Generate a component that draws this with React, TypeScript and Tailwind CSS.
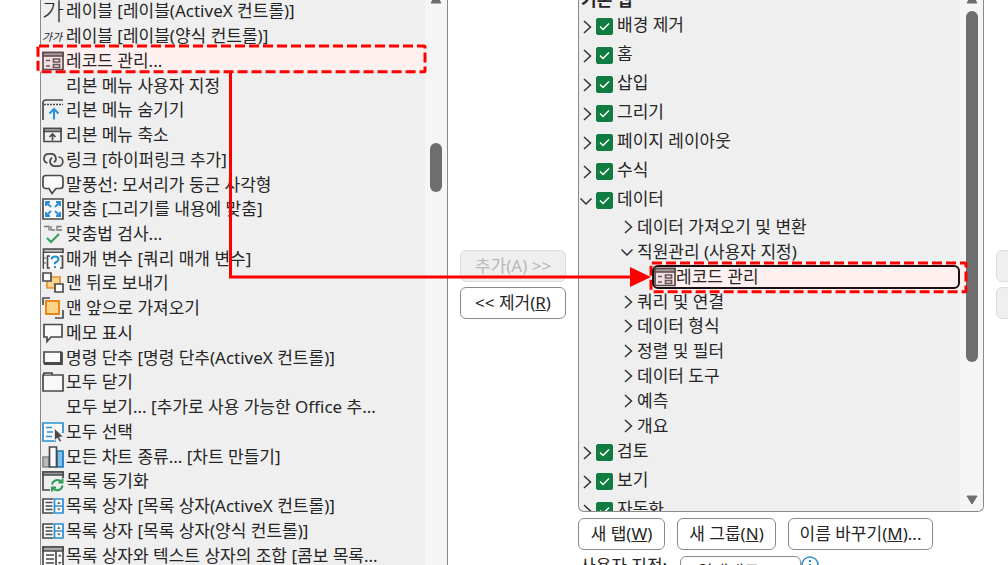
import { useState } from "react";
import type { ReactNode } from "react";
import { clsx } from "clsx";

const DARK = "#4a4a4a";
const BLUE = "#2b8fd6";

function Icon({ children }: { children: ReactNode }) {
  return (
    <svg viewBox="0 0 22 22" className="w-[22px] h-[22px] block" fill="none" stroke={DARK} strokeWidth="1.7">
      {children}
    </svg>
  );
}

function ListBoxIcon() {
  return (
    <Icon>
      <path d="M11.5 4H1v14h10.5" fill="#fafafa" />
      <path d="M3.5 7.5h7M3.5 11h7M3.5 14.5h7" strokeWidth="1.3" />
      <path d="M12.5 4H21v14h-8.5zM12.5 11H21" stroke={BLUE} fill="#fff" />
      <path d="M15 8.8h3.6L16.8 6.6zM15 13.4h3.6l-1.8 2.2z" fill={DARK} stroke="none" />
    </Icon>
  );
}

function RecordIcon() {
  return (
    <Icon>
      <path d="M1 2.5h20v17H1z" stroke="#5a4a4b" fill="#f3dfe0" />
      <path d="M1 2.5h20V6H1z" stroke="#5a4a4b" fill="#a89a9b" />
      <path d="M4 10.5h4M4 16h4" stroke="#6a5a5b" />
      <path d="M11.5 9h6v3h-6zM11.5 14.5h6v3h-6z" stroke="#6a5a5b" />
    </Icon>
  );
}

const icons: Record<string, ReactNode> = {
  label: <span className="text-2xl leading-[22px] font-light">가</span>,
  labelSmall: <span className="text-[11px] leading-[22px] italic whitespace-nowrap">가가</span>,
  record: <RecordIcon />,
  hideRibbon: (
    <Icon>
      <path d="M1 21V4q0-3 3-3h17" />
      <path d="M2 5.5h19" strokeDasharray="2 1" />
      <path d="M12 20.5v-10M7.5 14.5l4.500-4.500 4.500 4.500" stroke={BLUE} strokeWidth="2" />
    </Icon>
  ),
  minRibbon: (
    <Icon>
      <path d="M2 4.500h17v13H2z" />
      <path d="M2 4.500h17v3H2z" fill="#aaa" />
      <path d="M10.500 16.500v-6M7.500 13l3-3 3 3" />
    </Icon>
  ),
  link: (
    <Icon>
      <path d="M5.500 14A4.700 4.700 0 0 1 6 4.800h3.500A4.700 4.700 0 0 1 12 13.300" />
      <path d="M16.500 8a4.600 4.600 0 0 1-.5 9.200h-3.500A4.700 4.700 0 0 1 10 8.700" />
    </Icon>
  ),
  callout: (
    <Icon>
      <path d="M4 1.500h14q3 0 3 3v7q0 3-3 3h-4l-4 5-3-5H4q-3 0-3-3v-7q0-3 3-3z" fill="#fafafa" />
    </Icon>
  ),
  fit: (
    <Icon>
      <path d="M1 1h20v20H1z" fill="#fafafa" />
      <path
        d="M9 9L4 4M4 8V4h4M13 9l5-5M14 4h4v4M9 13l-5 5M4 14v4h4M13 13l5 5M18 14v4h-4"
        stroke={BLUE}
        strokeWidth="1.9"
      />
    </Icon>
  ),
  spelling: (
    <Icon>
      <path d="M2 3.500h5v4M9 3v4h4M19.500 3.500H15V7h5" strokeWidth="1.300" stroke="#777" />
      <path d="M5 15l4 4 8-8" stroke="#2f9e58" strokeWidth="2" />
    </Icon>
  ),
  params: (
    <Icon>
      <path d="M1.500 20V1H21v3.500H2" fill="#bbb" />
      <path d="M1.500 5h19V21h-19z" fill="#fafafa" stroke="none" />
      <path d="M1.500 4v17M1 10h3M1 15h3" strokeWidth="1.200" />
      <path d="M8 8H5.500v12H8M18 8h2.500v12H18" />
      <path d="M9.500 11.500q0-3 3.500-3t3.500 2.700q0 1.800-3.500 3.500v1.500M13 18v2" stroke={BLUE} strokeWidth="2" />
    </Icon>
  ),
  sendBack: (
    <Icon>
      <path d="M5 5h13v11H5z" fill="#fbd38a" stroke="#e8912d" />
      <path d="M1 1h8v8H1zM13 12h8v8h-8z" fill="#fafafa" />
    </Icon>
  ),
  bringFront: (
    <Icon>
      <path d="M1 8V1h7M21 13v8h-8" />
      <path d="M4 4h13v13H4z" fill="#fdd585" stroke="#e8861d" strokeWidth="2" />
    </Icon>
  ),
  memo: (
    <Icon>
      <path d="M2 2.500h18v12.500H9l-4 4.500V15H2z" fill="#fafafa" />
    </Icon>
  ),
  command: (
    <Icon>
      <path d="M2 5h17v11H2z" fill="#fafafa" />
      <path d="M19.500 5v11.500H2" strokeWidth="2.800" />
    </Icon>
  ),
  closeAll: (
    <Icon>
      <path d="M1 4h20v16H1z" fill="#f8f8f8" />
      <path d="M2 4V2h8v2" fill="#aaa" />
    </Icon>
  ),
  selectAll: (
    <Icon>
      <path d="M14 20H1V2h20v10" stroke={BLUE} fill="#fafafa" />
      <path d="M4 6.500h6M5 11h6M4 15.500h6" stroke={BLUE} />
      <path d="M12.500 7.500v12l3-2.500 2 4 2-1-2-4h4z" fill={DARK} stroke="#fff" strokeWidth=".6" />
    </Icon>
  ),
  chart: (
    <Icon>
      <path d="M1 11h6v10H1z" fill="#b9b9b9" stroke="#888" />
      <path d="M15 5h6v16h-6z" fill="#7cc0f0" stroke="#1f78b8" />
      <path d="M7.500 1h7v20h-7z" fill="#fafafa" />
    </Icon>
  ),
  sync: (
    <Icon>
      <path d="M8 20H1V2h20v6" />
      <path d="M1 2h20v3H1z" fill="#999" />
      <path
        d="M10 14.500a5.500 5.500 0 0 1 9.500-2.500M20.500 8.500v4h-4M20.500 15.500a5.500 5.500 0 0 1-9.500 3M10 21.500v-4h4"
        stroke="#2f9e58"
        strokeWidth="2"
      />
    </Icon>
  ),
  listBox: <ListBoxIcon />,
  combo: (
    <Icon>
      <path d="M1 2h20v20H1z" fill="#fafafa" />
      <path d="M1 2h20v4H1z" fill="#aaa" />
      <path d="M14 6v16M4 10h8M4 14h8M4 18h8" />
      <path d="M16 11.500h3.500L17.700 9zM16 17h3.500l-1.800 2.500z" fill={DARK} stroke="none" />
    </Icon>
  ),
};

const commands = [
  { icon: "label", text: "레이블 [레이블(ActiveX 컨트롤)]" },
  { icon: "labelSmall", text: "레이블 [레이블(양식 컨트롤)]" },
  { icon: "record", text: "레코드 관리...", marked: true },
  { icon: "", text: "리본 메뉴 사용자 지정" },
  { icon: "hideRibbon", text: "리본 메뉴 숨기기" },
  { icon: "minRibbon", text: "리본 메뉴 축소" },
  { icon: "link", text: "링크 [하이퍼링크 추가]" },
  { icon: "callout", text: "말풍선: 모서리가 둥근 사각형" },
  { icon: "fit", text: "맞춤 [그리기를 내용에 맞춤]" },
  { icon: "spelling", text: "맞춤법 검사..." },
  { icon: "params", text: "매개 변수 [쿼리 매개 변수]" },
  { icon: "sendBack", text: "맨 뒤로 보내기" },
  { icon: "bringFront", text: "맨 앞으로 가져오기" },
  { icon: "memo", text: "메모 표시" },
  { icon: "command", text: "명령 단추 [명령 단추(ActiveX 컨트롤)]" },
  { icon: "closeAll", text: "모두 닫기" },
  { icon: "", text: "모두 보기... [추가로 사용 가능한 Office 추..." },
  { icon: "selectAll", text: "모두 선택" },
  { icon: "chart", text: "모든 차트 종류... [차트 만들기]" },
  { icon: "sync", text: "목록 동기화" },
  { icon: "listBox", text: "목록 상자 [목록 상자(ActiveX 컨트롤)]" },
  { icon: "listBox", text: "목록 상자 [목록 상자(양식 컨트롤)]" },
  { icon: "combo", text: "목록 상자와 텍스트 상자의 조합 [콤보 목록..." },
];

const tabsBefore = ["배경 제거", "홈", "삽입", "그리기", "페이지 레이아웃", "수식", "데이터"];
const tabsAfter = ["검토", "보기", "자동화"];
const groupsBefore = ["데이터 가져오기 및 변환", "직원관리 (사용자 지정)"];
const groupsAfter = ["쿼리 및 연결", "데이터 형식", "정렬 및 필터", "데이터 도구", "예측", "개요"];

// Dashed red frame drawn behind the content of the marked row
function Marker({ className }: { className: string }) {
  return (
    <div className={clsx("absolute pointer-events-none", className)}>
      <svg className="block w-full h-full overflow-visible">
        <rect width="100%" height="100%" rx="1" fill="#fff0f0" stroke="#ff0000" strokeWidth="3" strokeDasharray="10 4" />
      </svg>
    </div>
  );
}

function Chevron({ open, label }: { open: boolean; label: string }) {
  return (
    <button aria-label={label} aria-expanded={open} className="w-[17px] h-5 flex items-center shrink-0">
      <svg viewBox="0 0 16 16" className="w-4 h-4" fill="none" stroke="#333" strokeWidth="1.5">
        <path d={open ? "M1.500 5.500l5.500 5.500 5.500-5.500" : "M5 2l6.500 6L5 14"} />
      </svg>
    </button>
  );
}

function TabRow({ name, open = false }: { name: string; open?: boolean }) {
  const [checked, setChecked] = useState(true);
  return (
    <li className="h-[29px] flex items-center">
      <Chevron open={open} label={name} />
      <label className="flex items-center">
        <span className="grid shrink-0">
          <input
            type="checkbox"
            checked={checked}
            onChange={(e) => setChecked(e.target.checked)}
            className="appearance-none col-start-1 row-start-1 w-[17px] h-[17px] rounded-xs border border-[#107c41] checked:bg-[#107c41]"
          />
          <svg
            viewBox="0 0 17 17"
            className="col-start-1 row-start-1 w-[17px] h-[17px] pointer-events-none"
            fill="none"
            stroke="#fff"
            strokeWidth="1.5"
          >
            <path d="M4 8.500l3 3 6-6" />
          </svg>
        </span>
        <span className="pl-1 pb-1">{name}</span>
      </label>
    </li>
  );
}

function GroupRow({ name, open = false }: { name: string; open?: boolean }) {
  return (
    <li className="flex items-center pl-[41px]">
      <Chevron open={open} label={name} />
      <span>{name}</span>
    </li>
  );
}

function Arrow({ down = false }: { down?: boolean }) {
  return (
    <svg viewBox="0 0 12 10" className="w-3 h-[10px] block" fill="#6e6e6e" stroke="#6e6e6e" strokeLinejoin="round">
      <path d={down ? "M1 1h10L6 9z" : "M1 9h10L6 1z"} />
    </svg>
  );
}

function PushButton({ className, children, disabled }: { className?: string; children: ReactNode; disabled?: boolean }) {
  return (
    <button
      disabled={disabled}
      className={clsx(
        "h-8 rounded-md border whitespace-nowrap flex items-center justify-center",
        disabled ? "bg-[#efefef] border-[#dcdcdc] text-[#b8b8b8]" : "bg-white border-[#8a8a8a]",
        className
      )}
    >
      {children}
    </button>
  );
}

export default function App() {
  return (
    <div className="relative h-screen overflow-hidden bg-white pl-10 grid grid-cols-[408fr_106px_406fr_12px] grid-rows-[100%] gap-x-3 text-[17px] leading-5 text-[#262626] font-['Noto_Sans','Noto_Sans_CJK_KR',sans-serif]">
      <section className="flex min-w-0 bg-[#efefef] border-x border-[#8a8a8a]">
        <ul className="-mt-px h-[569px] flex-1 min-w-0 grid auto-rows-fr">
          {commands.map((cmd) => (
            <li key={cmd.text} className="relative flex items-center pl-px min-h-0 whitespace-nowrap">
              {cmd.marked && <Marker className="-left-[3px] right-0 -top-0.5 bottom-px" />}
              <span className="relative w-6 h-[22px] shrink-0">{icons[cmd.icon]}</span>
              <span className="relative">{cmd.text}</span>
            </li>
          ))}
        </ul>
        <div className="w-[22px] shrink-0 bg-[#f5f5f5] flex flex-col items-center">
          <div className="-mt-1.5 h-[149px]">
            <Arrow />
          </div>
          <div className="w-3 h-[49px] rounded-full bg-[#6e6e6e]" />
        </div>
      </section>

      <div className="pt-[250px] flex flex-col gap-[5px]">
        <PushButton disabled>추가(A) &gt;&gt;</PushButton>
        <PushButton>
          &lt;&lt; 제거(<u>R</u>)
        </PushButton>
      </div>

      <section className="min-w-0">
        <div className="h-[512px] flex overflow-hidden bg-[#efefef] border border-t-0 border-[#8a8a8a] rounded-b-md">
          <div className="flex-1 min-w-0 whitespace-nowrap">
            <h2 className="h-3 flex items-end font-bold pl-0.5 pb-0.5">기본 탭</h2>
            <ul>
              {tabsBefore.map((name) => (
                <TabRow key={name} name={name} open={name === "데이터"} />
              ))}
            </ul>
            <ul className="h-[223px] grid auto-rows-fr">
              {groupsBefore.map((name, i) => (
                <GroupRow key={name} name={name} open={i === 1} />
              ))}
              <li className="relative pl-[73px] flex">
                <Marker className="left-[72px] -right-[6px] -top-0.5 -bottom-0.5" />
                <button className="relative flex-1 flex items-center border-2 border-[#1a1012] rounded-md">
                  <RecordIcon />
                  <span>레코드 관리</span>
                </button>
              </li>
              {groupsAfter.map((name) => (
                <GroupRow key={name} name={name} />
              ))}
            </ul>
            <ul>
              {tabsAfter.map((name) => (
                <TabRow key={name} name={name} />
              ))}
            </ul>
          </div>
          <div className="w-[23px] shrink-0 bg-[#f5f5f5] flex flex-col items-center">
            <div className="-mt-1.5 h-[17px]">
              <Arrow />
            </div>
            <div className="w-3 h-[351px] rounded-full bg-[#6e6e6e]" />
            <div className="mt-auto mb-1.5">
              <Arrow down />
            </div>
          </div>
        </div>
        <div className="flex gap-3 pt-1.5">
          <PushButton className="w-[87px]">
            새 탭(<u>W</u>)
          </PushButton>
          <PushButton className="w-[99px]">
            새 그룹(<u>N</u>)
          </PushButton>
          <PushButton className="w-[145px]">
            이름 바꾸기(<u>M</u>)...
          </PushButton>
        </div>
        <div className="flex items-start pt-1.5">
          <label htmlFor="custom" className="w-[102px] pl-0.5">
            사용자 지정:
          </label>
          <select id="custom" className="w-[121px] h-8 px-4 appearance-none bg-white border border-[#8a8a8a] rounded-md">
            <option>원래대로(E)</option>
          </select>
          <svg viewBox="0 0 18 18" className="w-[18px] h-[18px]" fill="none" stroke={BLUE} strokeWidth="1.500">
            <circle cx="9" cy="9" r="8" />
            <path d="M9 4v2M9 8v6" strokeWidth="2" />
          </svg>
        </div>
      </section>

      <div className="pt-[250px] flex flex-col gap-[5px] overflow-hidden">
        <PushButton disabled className="w-8 shrink-0">{null}</PushButton>
        <PushButton disabled className="w-8 shrink-0">{null}</PushButton>
      </div>

      {/* connector from the command to its place in the ribbon */}
      <svg className="absolute left-[228px] top-[72px] w-[424px] h-[218px] pointer-events-none" fill="none">
        <path d="M2.500 0v205H404" stroke="#ff0000" strokeWidth="3" />
        <path d="M402 195l21 10-21 10z" fill="#ff0000" />
      </svg>
    </div>
  );
}
